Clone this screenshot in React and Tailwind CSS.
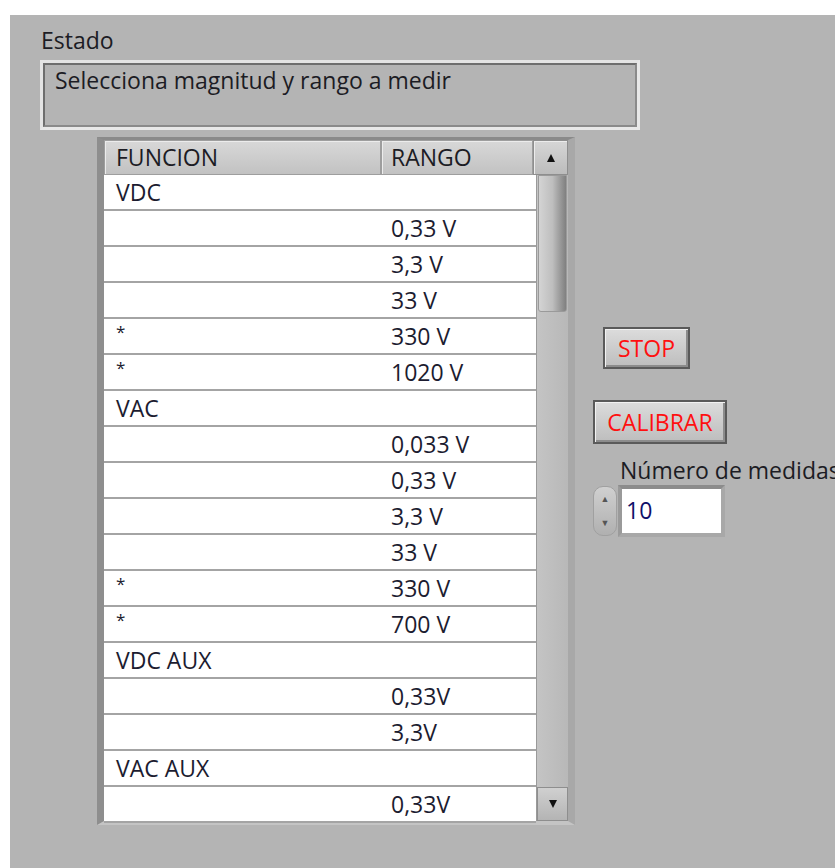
import React from "react";

const rows = [
  ["VDC", ""],
  ["", "0,33 V"],
  ["", "3,3 V"],
  ["", "33 V"],
  ["*", "330 V"],
  ["*", "1020 V"],
  ["VAC", ""],
  ["", "0,033 V"],
  ["", "0,33 V"],
  ["", "3,3 V"],
  ["", "33 V"],
  ["*", "330 V"],
  ["*", "700 V"],
  ["VDC AUX", ""],
  ["", "0,33V"],
  ["", "3,3V"],
  ["VAC AUX", ""],
  ["", "0,33V"],
];

function Arrow({ up }) {
  return (
    <svg width="10" height="10" viewBox="0 0 10 10">
      {up ? <path d="M5 1 L9 9 L1 9 Z" fill="#111" /> : <path d="M1 1 L9 1 L5 9 Z" fill="#111" />}
    </svg>
  );
}

function LvButton({ children, className }) {
  return (
    <div
      className={`flex items-center justify-center border-2 border-[#5a5a5a] bg-gradient-to-b from-[#dcdcdc] to-[#bdbdbd] shadow-[inset_1px_1px_0_#f2f2f2,inset_-2px_-2px_0_#8c8c8c] text-[#ff1010] ${className}`}
    >
      {children}
    </div>
  );
}

export default function App() {
  return (
    <div className="w-[835px] h-[868px] bg-white pl-[10px] pt-[15px] font-['Open_Sans',sans-serif] text-[23px] text-[#1c1c24] overflow-hidden">
      <div className="w-[825px] h-[853px] bg-[#b4b4b4] pt-[11px]">
        {/* status indicator */}
        <div className="ml-[31px] leading-[28px]">Estado</div>
        <div className="ml-[30px] mt-[6px] w-[600px] h-[70px] border-[3px] border-t-[#e4e4e4] border-l-[#e4e4e4] border-r-[#e8e8e8] border-b-[#e8e8e8]">
          <div className="h-full border-2 border-t-[#6e6e6e] border-l-[#6e6e6e] border-r-[#8a8a8a] border-b-[#8a8a8a] pl-[10px] leading-[30px]">
            Selecciona magnitud y rango a medir
          </div>
        </div>

        <div className="flex mt-[7px]">
          {/* listbox */}
          <div className="ml-[87px] w-[478px] h-[688px] border-t-[3px] border-l-[7px] border-r-[7px] border-b-[4px] border-t-[#8a8a8a] border-l-[#8e8e8e] border-r-[#a8a8a8] border-b-[#c4c4c4] bg-[#c8c8c8] flex flex-col">
            <div className="flex h-[35px]">
              <div className="w-[277px] h-full bg-gradient-to-b from-[#d8d8d8] to-[#c2c2c2] border border-[#9e9e9e] shadow-[inset_1px_1px_0_#ececec] pl-[11px] leading-[33px]">
                FUNCION
              </div>
              <div className="w-[152px] h-full bg-gradient-to-b from-[#d8d8d8] to-[#c2c2c2] border border-[#9e9e9e] shadow-[inset_1px_1px_0_#ececec] pl-[9px] leading-[33px]">
                RANGO
              </div>
              <div className="w-[35px] h-full bg-gradient-to-b from-[#d6d6d6] to-[#bcbcbc] border border-[#8e8e8e] shadow-[inset_1px_1px_0_#ececec] flex items-center justify-center">
                <Arrow up />
              </div>
            </div>
            <div className="flex flex-1 min-h-0">
              <div className="w-[432px] flex flex-col">
                {rows.map((r, i) => (
                  <div
                    key={i}
                    className="flex h-[36px] bg-white border-b-2 border-[#a4a4a4] leading-[34px] text-[#1c1c30]"
                  >
                    <div className="w-[277px] pl-[12px]">
                      {r[0] === "*" ? <span className="text-[17px] leading-[26px] align-top">*</span> : r[0]}
                    </div>
                    <div className="flex-1 pl-[10px]">{r[1]}</div>
                  </div>
                ))}
              </div>
              {/* scrollbar */}
              <div className="w-[32px] flex flex-col bg-gradient-to-r from-[#c4c4c4] to-[#b8b8b8] border-l border-[#9a9a9a]">
                <div className="h-[137px] mx-[1px] rounded-b-[3px] bg-gradient-to-r from-[#d4d4d4] via-[#bebebe] to-[#808080] border border-[#9a9a9a]" />
                <div className="flex-1" />
                <div className="h-[34px] bg-gradient-to-b from-[#d0d0d0] to-[#b4b4b4] border border-[#8e8e8e] flex items-center justify-center">
                  <Arrow />
                </div>
              </div>
            </div>
          </div>

          {/* controls */}
          <div className="flex flex-col ml-[18px] pt-[190px]">
            <LvButton className="ml-[10px] w-[87px] h-[42px]">STOP</LvButton>
            <LvButton className="mt-[31px] w-[134px] h-[44px]">CALIBRAR</LvButton>
            <div className="ml-[27px] mt-[12px] leading-[28px] whitespace-nowrap">Número de medidas</div>
            <div className="flex items-center mt-[1px]">
              <div className="w-[24px] h-[50px] flex flex-col rounded-[10px] bg-gradient-to-b from-[#d0d0d0] to-[#b0b0b0] border border-[#a0a0a0] items-center justify-around text-[#555] text-[9px]">
                <span>▲</span>
                <span>▼</span>
              </div>
              <div className="ml-[1px] w-[107px] h-[52px] border-[4px] border-t-[#8c8c8c] border-l-[#9a9a9a] border-r-[#a8a8a8] border-b-[#a8a8a8] bg-[#a8a8a8]">
                <div className="h-full bg-white pl-[4px] leading-[42px] text-[#10106a]">10</div>
              </div>
            </div>
          </div>
        </div>
      </div>
    </div>
  );
}
